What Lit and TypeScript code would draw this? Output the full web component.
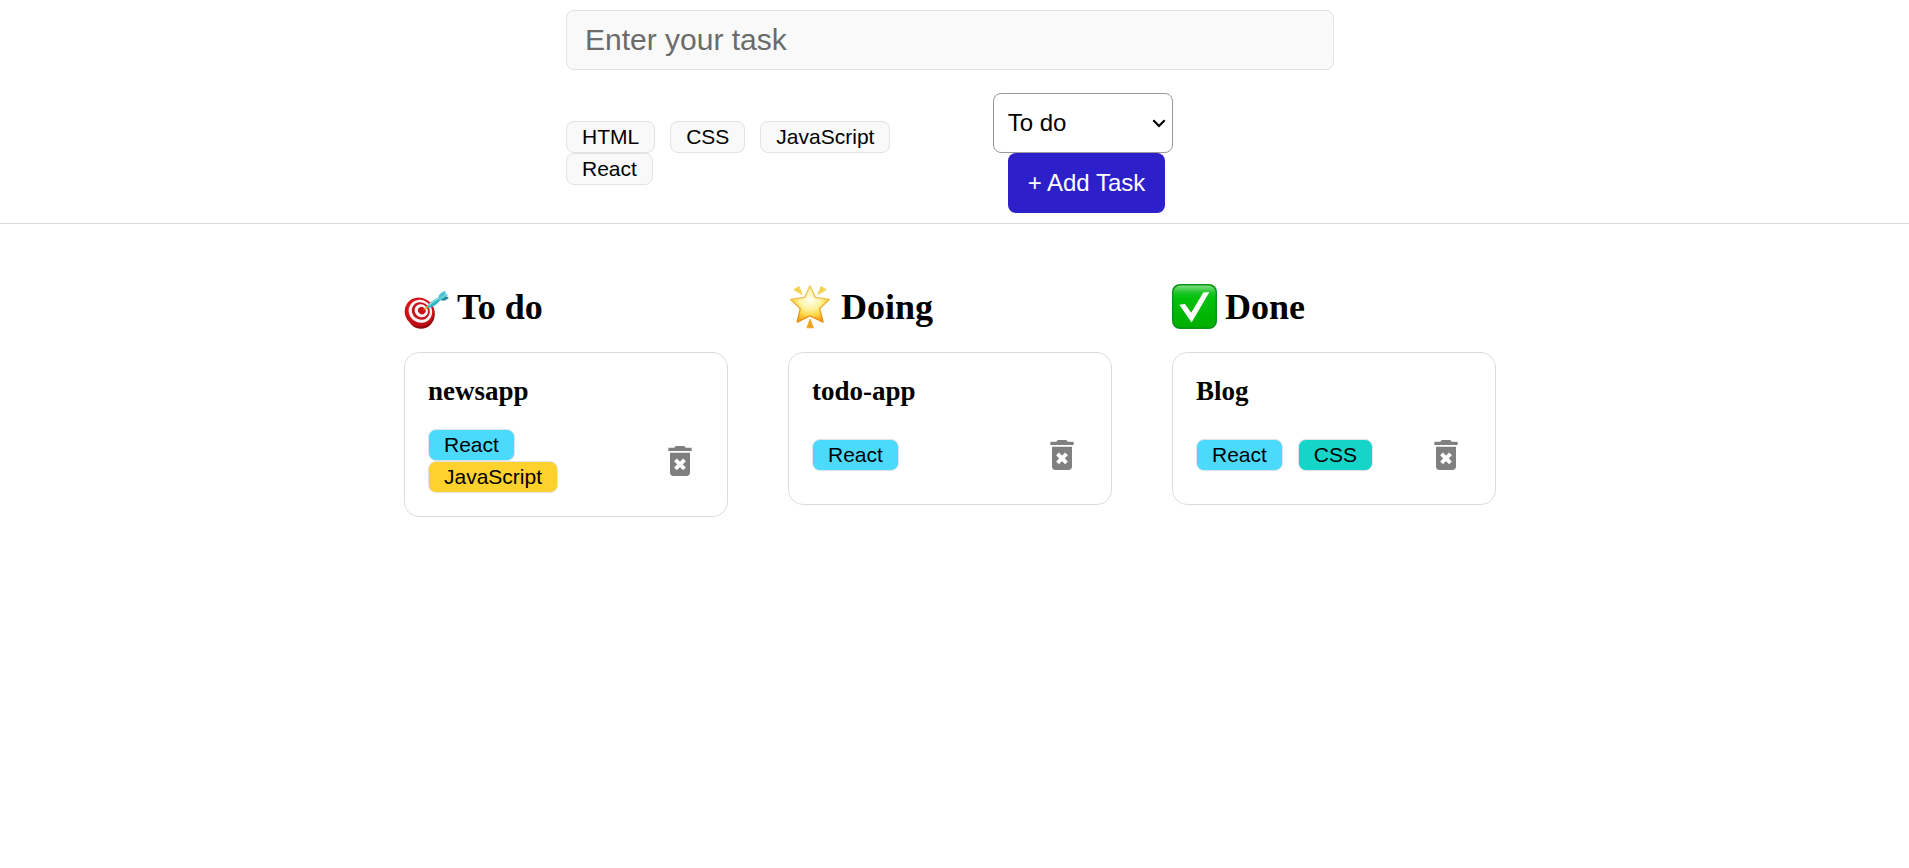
import { LitElement, html, css, svg } from "lit";
import { customElement, property, state } from "lit/decorators.js";
import { classMap } from "lit/directives/class-map.js";

type Status = "todo" | "doing" | "done";

interface Task {
  title: string;
  status: Status;
  tags: string[];
}

const TAGS = ["HTML", "CSS", "JavaScript", "React"];

const COLUMNS: { status: Status; label: string }[] = [
  { status: "todo", label: "To do" },
  { status: "doing", label: "Doing" },
  { status: "done", label: "Done" },
];

const tagStyles = css`
  .tag {
    font-family: "Liberation Sans", Arial, sans-serif;
    font-size: 21px;
    line-height: 24px;
    color: #000;
    background: #f9f9f9;
    border: 1px solid #dfe3e6;
    border-radius: 8px;
    padding: 3px 15px;
    margin: 0 15px 0 0;
    white-space: nowrap;
  }
  .html { background: #fda821; }
  .css { background: #15d4c8; }
  .javascript { background: #ffd12c; }
  .react { background: #4cdafc; }
`;

const targetIcon = svg`
  <defs>
    <linearGradient id="rim" x1="0" y1="0" x2="1" y2="1">
      <stop offset="0" stop-color="#e0161c" /><stop offset="1" stop-color="#b80c14" />
    </linearGradient>
  </defs>
  <ellipse cx="17" cy="30" rx="13.8" ry="14.7" fill="#8f0b10" />
  <ellipse cx="15.4" cy="28" rx="15" ry="14.2" transform="rotate(35 15.4 28)" fill="url(#rim)" />
  <ellipse cx="16.4" cy="27.3" rx="12" ry="11.2" transform="rotate(35 16.4 27.3)" fill="#faf4f4" />
  <ellipse cx="16.8" cy="27" rx="9.3" ry="8.5" transform="rotate(35 16.8 27)" fill="#c8121a" />
  <ellipse cx="17.3" cy="26.8" rx="6.9" ry="6.3" transform="rotate(35 17.3 26.8)" fill="#faf4f4" />
  <ellipse cx="17.8" cy="26.6" rx="3.9" ry="3.6" transform="rotate(35 17.8 26.6)" fill="#c8121a" />
  <path d="M18.5 26.6L24 20.8L26 23.2Z" fill="#e3a51d" />
  <path d="M23 23.8C24 19.5 28 16.3 34.5 13.4L36.6 16C32.8 20.5 28.6 24 23 23.8Z" fill="#35b5c4" />
  <path d="M24.8 21.5C27 18.6 30.5 16.4 34.6 14.3" stroke="#8de3ea" stroke-width="1.3" fill="none" />
  <path d="M34.4 14.2C34.2 11.2 36.5 8.6 41.2 6.8L41.7 10.2L36.4 14.9Z" fill="#4cc3cf" />
  <path d="M35.7 15.6L41.3 11.3L44.9 14C42 16.5 38.6 17.6 35.7 15.6Z" fill="#238e9d" />
  <path d="M34 15.2L43 9.6L43.8 11.4L36 15.9Z" fill="#66d3dc" />
`;

const starIcon = svg`
  <defs>
    <radialGradient id="glow" cx=".5" cy=".38" r=".6">
      <stop offset="0" stop-color="#fffef0" /><stop offset=".45" stop-color="#fff3a0" />
      <stop offset=".75" stop-color="#fdd545" /><stop offset="1" stop-color="#f2a61e" />
    </radialGradient>
    <linearGradient id="edge" x1="0" y1="0" x2="0" y2="1">
      <stop offset="0" stop-color="#f3d067" /><stop offset="1" stop-color="#e88e0c" />
    </linearGradient>
  </defs>
  <path d="M5.8 5.7L11 2.5L14.2 10.6Z M38.2 5.7L33 2.5L29.8 10.6Z" fill="#f5d14b" stroke="#f5d14b" stroke-width=".8" stroke-linejoin="round" />
  <path d="M22 35.2L18.9 43.8H25.5Z" fill="#eda21f" stroke="#eda21f" stroke-width=".8" stroke-linejoin="round" />
  <path d="M22 1.8L27.3 13.4L41.4 15.4L31.7 24.4L35 38L22 31.8L9.2 38L12.3 24.4L2.6 15.4L16.8 13.4Z"
    fill="url(#glow)" stroke="url(#edge)" stroke-width="1.4" stroke-linejoin="round" />
`;

const checkIcon = svg`
  <defs>
    <linearGradient id="face" x1="0" y1="0" x2="0" y2="1">
      <stop offset="0" stop-color="#7fe07f" /><stop offset=".17" stop-color="#1fc42a" />
      <stop offset=".3" stop-color="#00c10a" /><stop offset="1" stop-color="#00ae00" />
    </linearGradient>
  </defs>
  <rect width="45" height="45" rx="8" fill="#0a9415" />
  <rect x="1.5" y="1.5" width="42" height="42" rx="7" fill="url(#face)" />
  <path d="M7.3 20.7L12.9 20L19.2 28.8L31.3 8.6L37.4 8L19.6 38.4Z" fill="#fff" />
`;

const ICONS = { todo: targetIcon, doing: starIcon, done: checkIcon };

@customElement("task-card")
export class TaskCard extends LitElement {
  @property({ attribute: false }) task!: Task;

  static styles = [
    tagStyles,
    css`
      :host { display: block; }
      .card {
        border: 1px solid #dcdcdc;
        border-radius: 15px;
        padding: 23px;
      }
      .title {
        margin: 0 0 23px;
        font: bold 27px/30px "Liberation Serif", "Times New Roman", serif;
      }
      .row {
        display: flex;
        align-items: center;
        justify-content: space-between;
      }
      .tags {
        display: flex;
        flex-wrap: wrap;
      }
      .delete {
        display: flex;
        align-items: center;
        justify-content: center;
        width: 52px;
        min-width: 40px;
        height: 52px;
        padding: 0;
        border: 0;
        border-radius: 50%;
        background: none;
        cursor: pointer;
      }
      .bin {
        flex: none;
        width: 40px;
        height: 40px;
        fill: #808080;
      }
      .cross {
        stroke: #fff;
        stroke-width: 2.3;
      }
    `,
  ];

  private remove() {
    this.dispatchEvent(new CustomEvent("remove-task", { detail: this.task }));
  }

  render() {
    return html`<article class="card">
      <h3 class="title">${this.task.title}</h3>
      <div class="row">
        <div class="tags">
          ${this.task.tags.map(
            (t) => html`<button type="button" class=${classMap({ tag: true, [t.toLowerCase()]: true })}>${t}</button>`
          )}
        </div>
        <button type="button" class="delete" aria-label="Delete" @click=${this.remove}>
          <svg class="bin" viewBox="0 0 24 24" aria-hidden="true">
            <path d="M6 19c0 1.1.9 2 2 2h8c1.1 0 2-.9 2-2V7H6v12zM15.5 4l-1-1h-5l-1 1H5v2h14V4z" />
            <path class="cross" d="M9.3 11.3l5.4 5.4M14.7 11.3l-5.4 5.4" />
          </svg>
        </button>
      </div>
    </article>`;
  }
}

@customElement("app-root")
export class AppRoot extends LitElement {
  @state() private tasks: Task[] = [
    { title: "newsapp", status: "todo", tags: ["React", "JavaScript"] },
    { title: "todo-app", status: "doing", tags: ["React"] },
    { title: "Blog", status: "done", tags: ["React", "CSS"] },
  ];
  @state() private selected: string[] = [];
  @state() private draft = "";
  @state() private status: Status = "todo";

  static styles = [
    tagStyles,
    css`
      :host {
        display: block;
        color: #000;
        background: #fff;
        font-family: "Liberation Serif", "Times New Roman", serif;
      }
      .header {
        padding: 10px 9px 10px 0;
        border-bottom: 1px solid #dcdcdc;
      }
      .form {
        max-width: 768px;
        margin: 0 auto;
        display: grid;
        gap: 23px;
      }
      .entry,
      .status,
      .add {
        box-sizing: border-box;
        height: 60px;
        border-radius: 8px;
        font-family: "Liberation Sans", Arial, sans-serif;
      }
      .entry {
        width: 100%;
        padding: 0 18px;
        font-size: 30px;
        color: #000;
        background: #f9f9f9;
        border: 1px solid #dfe3e6;
      }
      .entry::placeholder { color: #6b6b6b; }
      .options {
        display: grid;
        grid-template-columns: 5fr 4fr;
        align-items: center;
      }
      .tags,
      .actions {
        display: flex;
        flex-wrap: wrap;
      }
      .picker {
        position: relative;
        display: flex;
      }
      .status {
        appearance: none;
        width: 180px;
        padding: 0 14px 2px;
        font-size: 24px;
        color: #000;
        background: #fff;
        border: 1px solid #999;
      }
      .chevron {
        position: absolute;
        top: 26px;
        right: 7px;
        width: 14px;
        height: 9px;
        fill: none;
        stroke: #000;
        stroke-width: 2.2;
        pointer-events: none;
      }
      .add {
        margin: 0 0 0 15px;
        padding: 0 20px;
        font-size: 24px;
        color: #fff;
        background: #2d1fca;
        border: 0;
        cursor: pointer;
      }
      .board {
        padding: 60px 9px 60px 0;
      }
      .columns {
        max-width: 1092px;
        margin: 0 auto;
        display: grid;
        grid-template-columns: repeat(3, 1fr);
        gap: 60px;
        align-items: start;
      }
      .column {
        display: grid;
        gap: 21px;
      }
      .heading {
        display: flex;
        align-items: flex-start;
        gap: 8px;
        margin: 0;
        font-size: 36px;
        line-height: 47px;
      }
      .icon {
        flex: none;
        width: 45px;
        height: 45px;
      }
    `,
  ];

  private toggle(tag: string) {
    this.selected = this.selected.includes(tag)
      ? this.selected.filter((t) => t !== tag)
      : [...this.selected, tag];
  }

  private submit(e: Event) {
    e.preventDefault();
    if (!this.draft.trim()) return;
    this.tasks = [...this.tasks, { title: this.draft, status: this.status, tags: this.selected }];
    this.draft = "";
    this.selected = [];
  }

  render() {
    return html`
      <header class="header">
        <form class="form" @submit=${this.submit}>
          <input
            class="entry"
            type="text"
            aria-label="Task"
            placeholder="Enter your task"
            .value=${this.draft}
            @input=${(e: Event) => (this.draft = (e.target as HTMLInputElement).value)}
          />
          <div class="options">
            <div class="tags">
              ${TAGS.map(
                (t) => html`<button
                  type="button"
                  class=${classMap({ tag: true, [t.toLowerCase()]: this.selected.includes(t) })}
                  @click=${() => this.toggle(t)}
                >${t}</button>`
              )}
            </div>
            <div class="actions">
              <div class="picker">
                <select
                  class="status"
                  aria-label="Status"
                  @change=${(e: Event) => (this.status = (e.target as HTMLSelectElement).value as Status)}
                >
                  ${COLUMNS.map((c) => html`<option value=${c.status}>${c.label}</option>`)}
                </select>
                <svg class="chevron" viewBox="0 0 14 9" aria-hidden="true"><path d="M1.3 1.3L7 7L12.7 1.3" /></svg>
              </div>
              <button type="submit" class="add">+ Add Task</button>
            </div>
          </div>
        </form>
      </header>
      <main class="board">
        <div class="columns">
          ${COLUMNS.map(
            (c) => html`<section class="column">
              <h2 class="heading">
                <svg class="icon" viewBox="0 0 45 45" aria-hidden="true">${ICONS[c.status]}</svg>
                ${c.label}
              </h2>
              ${this.tasks
                .filter((t) => t.status === c.status)
                .map(
                  (t) => html`<task-card
                    .task=${t}
                    @remove-task=${() => (this.tasks = this.tasks.filter((x) => x !== t))}
                  ></task-card>`
                )}
            </section>`
          )}
        </div>
      </main>
    `;
  }
}
